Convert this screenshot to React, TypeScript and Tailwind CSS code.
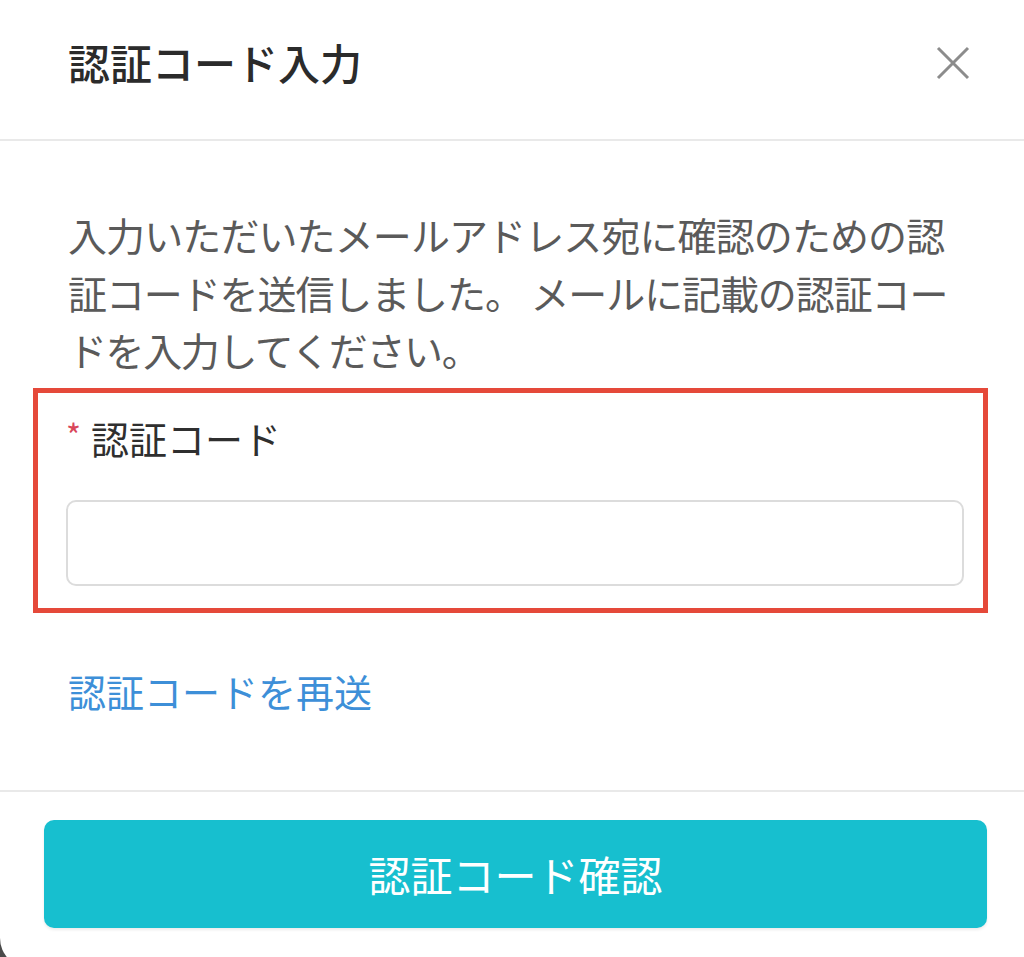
import { useState } from 'react';

const font = { fontFamily: '"Noto Sans CJK JP", "Noto Sans", sans-serif' };

function CloseIcon() {
  return (
    <svg viewBox="0 0 34 34" className="w-[34px] h-[34px]" fill="none" stroke="#8c8c8c" strokeWidth={3}>
      <path d="M2 2 L32 32 M32 2 L2 32" />
    </svg>
  );
}

export default function App() {
  const [code, setCode] = useState('');

  return (
    <div className="w-full h-[957px] overflow-hidden bg-[#4a4a4a]" style={font}>
      <div className="bg-white h-[968px] rounded-bl-[30px] flex flex-col">
        {/* header */}
        <header className="h-[141px] shrink-0 flex items-center justify-between pl-[68px] pr-[54px] pb-[16px] border-b-2 border-[#e9e9e9]">
          <h1 className="text-[42px] leading-none font-medium text-[#2b2b2b]">認証コード入力</h1>
          <button className="p-0 mt-[2px]" aria-label="close">
            <CloseIcon />
          </button>
        </header>

        {/* body */}
        <div className="pt-[65px]">
          <p className="px-[68px] text-[39px] leading-[57.5px] text-[#5a5a5a] whitespace-nowrap">
            <span className="tracking-[-0.9px]">入力いただいたメールアドレス宛に確認のための認</span>
            <br />
            <span className="tracking-[-1.1px]">証コードを送信しました。 メールに記載の認証コー</span>
            <br />
            <span className="tracking-[-1.4px]">ドを入力してください。</span>
          </p>

          <div className="mt-[9px] ml-[33px] mr-[36px] border-[5px] border-[#e5493a] pl-[28px] pr-[19px] pt-[20px] pb-[22px]">
            <label className="flex items-center h-[50px] text-[38px] leading-none text-[#2f2f2f]">
              <span className="text-[#d9475b] text-[32px] mr-[10px] -mt-[8px]">*</span>
              認証コード
            </label>
            <input
              value={code}
              onChange={e => setCode(e.target.value)}
              className="mt-[37px] block w-full h-[86px] rounded-[10px] border-2 border-[#dcdcdc] bg-white px-5 text-[36px] outline-none"
            />
          </div>

          <div className="px-[68px] mt-[53px] pb-[74px]">
            <a className="block text-[38px] leading-[50px] text-[#3d8fd8] cursor-pointer">認証コードを再送</a>
          </div>
        </div>

        {/* footer */}
        <div className="border-t-2 border-[#e9e9e9] pt-[28px] pl-[44px] pr-[37px]">
          <button className="w-full h-[108px] rounded-[10px] bg-[#17bfcf] text-white text-[42px] leading-none shadow-[0_2px_3px_rgba(0,0,0,0.08)]">
            認証コード確認
          </button>
        </div>
      </div>
    </div>
  );
}
